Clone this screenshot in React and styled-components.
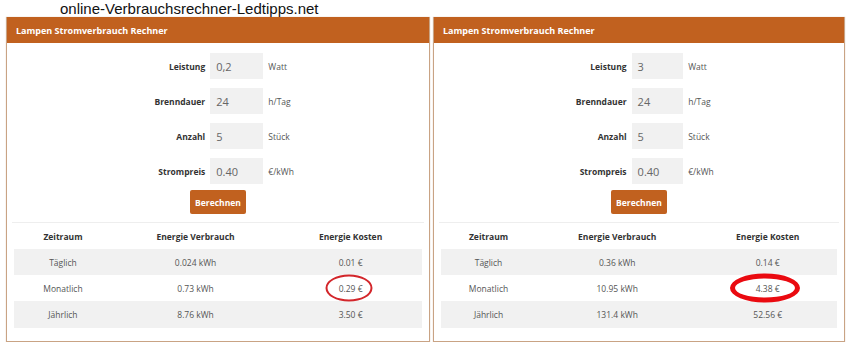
import React from "react";
import styled, { createGlobalStyle } from "styled-components";

const GlobalStyle = createGlobalStyle`
  body {
    margin: 0;
    background: #ffffff;
    font-family: "Open Sans", "Noto Sans", sans-serif;
  }
`;

const calcs = [
  {
    width: 424,
    inputs: ["0,2", "24", "5", "0.40"],
    rows: [
      ["Täglich", "0.024 kWh", "0.01 €"],
      ["Monatlich", "0.73 kWh", "0.29 €"],
      ["Jährlich", "8.76 kWh", "3.50 €"],
    ],
    mark: { w: 47, h: 27, stroke: 2, color: "#d3262b", dx: -2 },
  },
  {
    width: 412,
    inputs: ["3", "24", "5", "0.40"],
    rows: [
      ["Täglich", "0.36 kWh", "0.14 €"],
      ["Monatlich", "10.95 kWh", "4.38 €"],
      ["Jährlich", "131.4 kWh", "52.56 €"],
    ],
    mark: { w: 70, h: 29, stroke: 5, color: "#ea0a10", dx: -3 },
  },
];

const fields = [
  ["Leistung", "Watt"],
  ["Brenndauer", "h/Tag"],
  ["Anzahl", "Stück"],
  ["Strompreis", "€/kWh"],
];

function Calculator({ calc }) {
  return (
    <Panel $width={calc.width}>
      <Header>Lampen Stromverbrauch Rechner</Header>
      <Body>
        <Form>
          {fields.map(([label, unit], i) => (
            <React.Fragment key={label}>
              <Label>{label}</Label>
              <Input>{calc.inputs[i]}</Input>
              <Unit>{unit}</Unit>
            </React.Fragment>
          ))}
        </Form>
        <ButtonRow>
          <Button>Berechnen</Button>
        </ButtonRow>
        <Table>
          <Row>
            <HeadCell>Zeitraum</HeadCell>
            <HeadCell>Energie Verbrauch</HeadCell>
            <HeadCell>Energie Kosten</HeadCell>
          </Row>
          {calc.rows.map((r, i) => (
            <Row key={r[0]} $striped={i !== 1} $tall={i === 2}>
              <Cell>{r[0]}</Cell>
              <Cell>{r[1]}</Cell>
              <Cell>
                <Value>
                  {r[2]}
                  {i === 1 && <Mark {...calc.mark} />}
                </Value>
              </Cell>
            </Row>
          ))}
        </Table>
      </Body>
    </Panel>
  );
}

function App() {
  return (
    <>
      <GlobalStyle />
      <Title>online-Verbrauchsrechner-Ledtipps.net</Title>
      <Panels>
        {calcs.map((c, i) => (
          <Calculator key={i} calc={c} />
        ))}
      </Panels>
    </>
  );
}

const Title = styled.div`
  height: 17px;
  padding-left: 60px;
  font-family: "Liberation Sans", Arial, sans-serif;
  font-size: 15px;
  line-height: 17px;
  color: #111;
`;

const Panels = styled.div`
  display: flex;
  gap: 3px;
  padding-left: 6px;
`;

const Panel = styled.div`
  width: ${(p) => p.$width}px;
  box-sizing: border-box;
  border: 1px solid #c9a384;
  border-top: none;
  box-shadow: 0 0 1px rgba(160, 110, 70, 0.4);
`;

const Header = styled.div`
  height: 26px;
  background: #c1611f;
  color: #fff;
  font-weight: 700;
  font-size: 9px;
  display: flex;
  align-items: center;
  padding-left: 9px;
`;

const Body = styled.div`
  padding: 10px 5px 13px;
`;

const Form = styled.div`
  display: grid;
  grid-template-columns: 46.9% 12.9% 1fr;
  column-gap: 5px;
  row-gap: 9px;
  align-items: center;
`;

const Label = styled.div`
  text-align: right;
  font-weight: 700;
  font-size: 8.5px;
  color: #333;
`;

const Input = styled.div`
  height: 26px;
  background: #f1f1f1;
  display: flex;
  align-items: center;
  padding-left: 6px;
  font-size: 11px;
  color: #666;
`;

const Unit = styled.div`
  font-size: 8.5px;
  color: #555;
`;

const ButtonRow = styled.div`
  display: flex;
  justify-content: center;
  margin-top: 6px;
`;

const Button = styled.div`
  height: 24px;
  padding: 0 5px;
  display: flex;
  align-items: center;
  background: #c1611f;
  border-radius: 2px;
  color: #fff;
  font-weight: 700;
  font-size: 8.5px;
`;

const Table = styled.div`
  margin-top: 8px;
  border-top: 1px solid #eeeeee;
  padding: 0 2px;
`;

const Row = styled.div`
  display: grid;
  grid-template-columns: 24fr 41fr 35fr;
  height: ${(p) => (p.$tall ? 27 : 26)}px;
  align-items: center;
  background: ${(p) => (p.$striped ? "#f1f1f1" : "#ffffff")};
  &:first-child {
    height: 26px;
  }
`;

const Cell = styled.div`
  text-align: center;
  font-size: 8.5px;
  color: #555;
`;

const HeadCell = styled(Cell)`
  font-weight: 700;
  color: #333;
`;

const Value = styled.span`
  position: relative;
`;

const Mark = styled.span`
  position: absolute;
  left: 50%;
  top: 50%;
  width: ${(p) => p.w}px;
  height: ${(p) => p.h}px;
  box-sizing: border-box;
  border: ${(p) => p.stroke}px solid ${(p) => p.color};
  border-radius: 50%;
  transform: translate(calc(-50% + ${(p) => p.dx}px), -50%);
`;

export default App;
